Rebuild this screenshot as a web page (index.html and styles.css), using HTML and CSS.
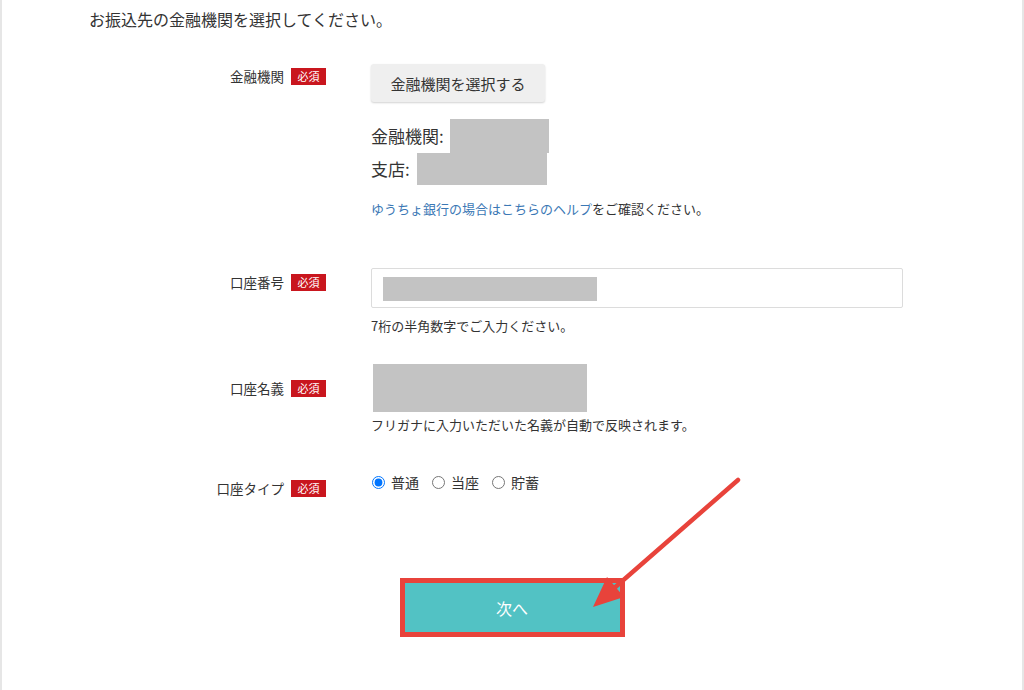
FILE: index.html
```html
<!DOCTYPE html>
<html lang="ja">
<head>
  <meta charset="UTF-8">
  <meta name="viewport" content="width=device-width, initial-scale=1.0">
  <link rel="stylesheet" href="styles.css">
  <title>振込先口座の登録</title>
</head>
<body>

  <div class="page">
    <p class="lead">お振込先の金融機関を選択してください。</p>

    <div class="form">
      <div class="row row-bank">
        <div class="label">金融機関<span class="badge">必須</span></div>
        <div class="field">
          <button class="select-btn" type="button">金融機関を選択する</button>
          <div class="bank-info">
            <p>金融機関:<span class="mask mask-bank"></span></p>
            <p>支店:<span class="mask mask-branch"></span></p>
          </div>
          <p class="help"><a href="#">ゆうちょ銀行の場合はこちらのヘルプ</a>をご確認ください。</p>
        </div>
      </div>

      <div class="row row-number">
        <div class="label">口座番号<span class="badge">必須</span></div>
        <div class="field">
          <div class="input-box"><span class="mask mask-number"></span></div>
          <p class="hint">7桁の半角数字でご入力ください。</p>
        </div>
      </div>

      <div class="row row-name">
        <div class="label">口座名義<span class="badge">必須</span></div>
        <div class="field">
          <div class="mask mask-name"></div>
          <p class="hint hint-name">フリガナに入力いただいた名義が自動で反映されます。</p>
        </div>
      </div>

      <div class="row row-type">
        <div class="label">口座タイプ<span class="badge">必須</span></div>
        <div class="field radios">
          <label><input type="radio" name="type" checked>普通</label>
          <label><input type="radio" name="type">当座</label>
          <label><input type="radio" name="type">貯蓄</label>
        </div>
      </div>
    </div>

    <div class="next-wrap">
      <button class="next-btn" type="button">次へ</button>
    </div>

    <!-- annotation arrow pointing at the next button -->
    <svg class="arrow" width="1024" height="690" viewBox="0 0 1024 690">
      <line x1="738" y1="480" x2="612" y2="590" stroke="#e8433b" stroke-width="4.5" stroke-linecap="round"/>
      <polygon points="593,607 607,577 624,597" fill="#e8433b"/>
    </svg>
  </div>

</body>
</html>
```

FILE: styles.css
```css
*{
  margin: 0;
  padding: 0;
  box-sizing: border-box;
}
body{
  font-family: "Noto Sans CJK JP", "Noto Sans", sans-serif;
  color: #333;
  background: #fff;
}
.page{
  position: relative;
  height: 690px;
  width: 1024px;
  border-left: 2px solid #e6e6e6;
  border-right: 2px solid #e6e6e6;
  overflow: hidden;
}
.lead{
  padding: 8px 0 0 87px;
  font-size: 16px;
  line-height: 22px;
}
.form{
  margin-top: 34px;
}
.row{
  display: flex;
  align-items: flex-start;
}
.label{
  width: 324px;
  display: flex;
  justify-content: flex-end;
  align-items: center;
  gap: 7px;
  font-size: 13.5px;
  line-height: 17px;
}
.badge{
  display: inline-block;
  width: 35px;
  height: 17px;
  background: #c9161e;
  color: #fff;
  font-size: 11px;
  line-height: 17px;
  text-align: center;
}
.field{
  margin-left: 45px;
  width: 532px;
}
.row-bank .label{
  padding-top: 4px;
}
.select-btn{
  height: 38px;
  width: 174px;
  border: none;
  border-radius: 3px;
  background: #efefef;
  box-shadow: 0 1px 2px rgba(0,0,0,0.18);
  font-family: inherit;
  font-size: 15px;
  color: #333;
}
.bank-info{
  margin-top: 17px;
  font-size: 17px;
  line-height: 33px;
}
.bank-info p{
  display: flex;
  align-items: center;
  height: 33px;
}
.mask{
  display: inline-block;
  background: #c3c3c3;
}
.mask-bank{
  width: 99px;
  height: 34px;
  margin-left: 6px;
}
.mask-branch{
  width: 130px;
  height: 32px;
  margin-left: 7px;
}
.help{
  margin-top: 16px;
  font-size: 13px;
  line-height: 16px;
}
.help a{
  color: #3b78b5;
  text-decoration: none;
}
.row-number{
  margin-top: 51px;
}
.row-number .label{
  padding-top: 6px;
}
.input-box{
  height: 40px;
  border: 1px solid #dcdcdc;
  border-radius: 2px;
  padding: 8px 0 0 11px;
}
.mask-number{
  width: 214px;
  height: 24px;
}
.hint{
  margin-top: 10px;
  font-size: 13px;
  line-height: 16px;
}
.row-name{
  margin-top: 30px;
}
.row-name .label{
  padding-top: 16px;
}
.mask-name{
  display: block;
  margin-left: 2px;
  width: 214px;
  height: 48px;
}
.hint-name{
  margin-top: 5px;
}
.row-type{
  margin-top: 39px;
}
.row-type .label{
  padding-top: 8px;
}
.radios{
  display: flex;
  align-items: center;
  gap: 12px;
  height: 20px;
  font-size: 14px;
}
.radios label{
  display: flex;
  align-items: center;
  gap: 6px;
}
.radios input{
  margin: 0 0 0 1px;
  width: 13px;
  height: 13px;
}
.next-wrap{
  display: flex;
  justify-content: center;
  margin-top: 81px;
}
.next-btn{
  width: 225px;
  height: 59px;
  border: 5px solid #e8433b;
  background: #52c2c4;
  color: #fff;
  font-family: inherit;
  font-size: 16px;
}
.arrow{
  position: absolute;
  top: 0;
  left: -2px;
  pointer-events: none;
}
```
